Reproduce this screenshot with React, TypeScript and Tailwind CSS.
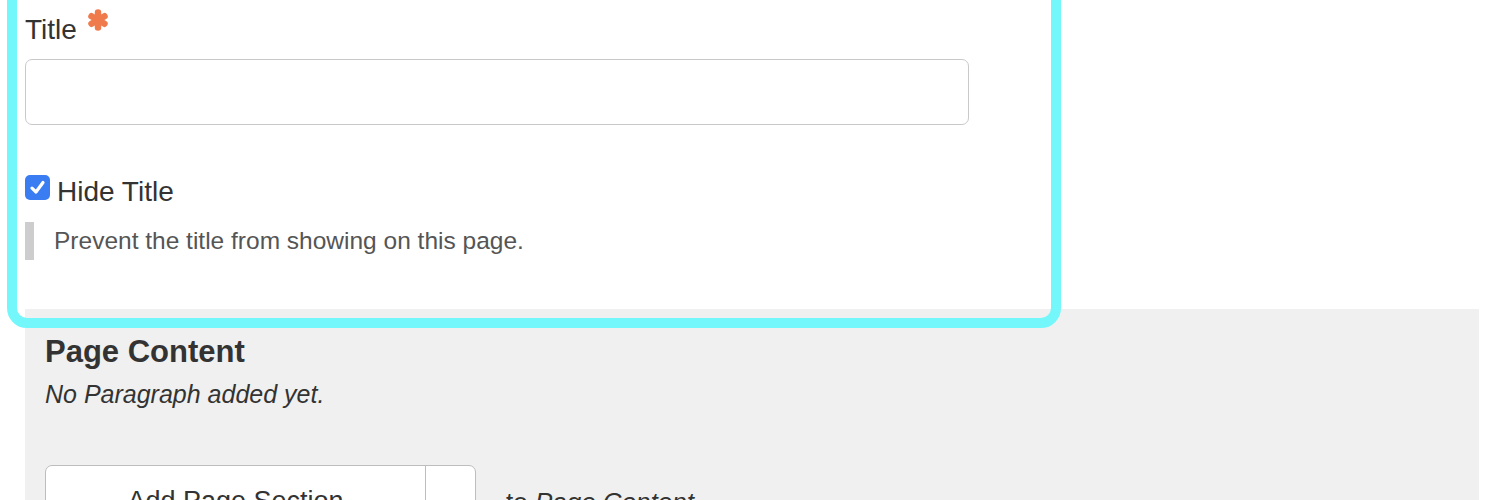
import React from "react";

function RequiredMark() {
  return (
    <svg width="22" height="22" viewBox="0 0 22 22" className="ml-[10px] mt-[-7px] shrink-0">
      <g stroke="#ef7b4c" strokeWidth="6.5" strokeLinecap="round">
        <line x1="11" y1="3.5" x2="11" y2="18.5" />
        <line x1="4.5" y1="7.25" x2="17.5" y2="14.75" />
        <line x1="4.5" y1="14.75" x2="17.5" y2="7.25" />
      </g>
    </svg>
  );
}

function CheckedBox() {
  return (
    <div className="w-[25px] h-[25px] rounded-[5px] bg-[#3a7cf1] flex items-center justify-center shrink-0">
      <svg width="17" height="17" viewBox="0 0 17 17" fill="none">
        <path d="M3 9.2 L7 13 L14 3.5" stroke="#fff" strokeWidth="3.2" strokeLinecap="round" strokeLinejoin="round" />
      </svg>
    </div>
  );
}

export default function App() {
  return (
    <div className="relative w-[1500px] h-[500px] overflow-hidden bg-white font-['Liberation_Sans',Helvetica,Arial,sans-serif] text-[#333]">
      {/* Title field */}
      <div className="pl-[25px] pt-[16px]">
        <div className="flex items-start">
          <label className="text-[28px] leading-[28px]">Title</label>
          <RequiredMark />
        </div>
        <div className="mt-[15px] w-[944px] h-[66px] rounded-[7px] border-[1.5px] border-[#c9c9c9] bg-white" />

        {/* Hide title */}
        <div className="mt-[50px] flex items-start gap-[7px]">
          <CheckedBox />
          <span className="mt-[3px] text-[28px] leading-[28px]">Hide Title</span>
        </div>
        <div className="mt-[16px] h-[38px] border-l-[9px] border-[#cdcdcd] pl-[20px] text-[24.5px] leading-[38px] text-[#555]">
          Prevent the title from showing on this page.
        </div>
      </div>

      {/* Paragraphs widget */}
      <div className="mt-[49px] ml-[25px] w-[1454px] h-[300px] bg-[#f0f0f0] pl-[20px] pt-[27px]">
        <h3 className="text-[31px] leading-[31px] font-bold">Page Content</h3>
        <p className="mt-[15px] text-[25px] leading-[25px] italic">No Paragraph added yet.</p>
        <div className="mt-[58px] flex items-start">
          <div className="flex w-[431px] h-[70px] rounded-[7px] border-[1.5px] border-[#bdbdbd] bg-white">
            <div className="w-[380px] border-r-[1.5px] border-[#bdbdbd] flex justify-center pt-[22px] text-[27px] leading-[27px]">
              Add Page Section
            </div>
            <div className="flex-1" />
          </div>
          <div className="ml-[30px] pt-[24px] text-[26px] leading-[26px]">
            to <em>Page Content</em>
          </div>
        </div>
      </div>

      {/* Focus highlight overlay */}
      <div className="absolute left-[7px] top-[-30px] w-[1054px] h-[358px] rounded-[20px] border-[10px] border-[#74f7fa] pointer-events-none" />
    </div>
  );
}
